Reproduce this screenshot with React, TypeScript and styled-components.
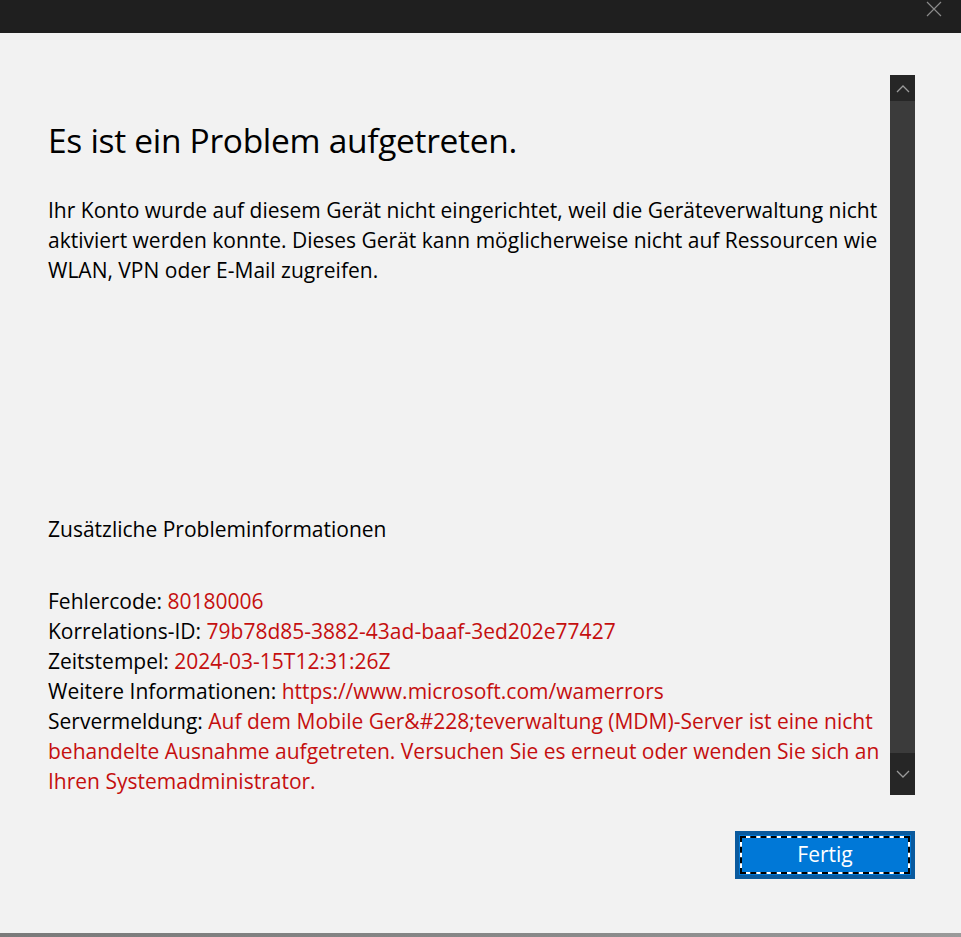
import React from "react";
import styled, { createGlobalStyle } from "styled-components";

const Global = createGlobalStyle`
  html, body { margin: 0; padding: 0; background: #f2f2f2; }
  body { font-family: "Open Sans", "Noto Sans", sans-serif; }
  * { box-sizing: border-box; }
`;

const Window = styled.div`
  width: 961px;
  height: 937px;
  display: flex;
  flex-direction: column;
  background: #f2f2f2;
  overflow: hidden;
`;

const TitleBar = styled.div`
  height: 33px;
  flex: none;
  background: #1f1f1f;
  display: flex;
  justify-content: flex-end;
  align-items: flex-start;
  padding: 1px 19px 0 0;
`;

const CloseIcon = styled.svg`
  width: 16px;
  height: 16px;
  display: block;
`;

const Body = styled.div`
  flex: 1;
  display: flex;
  flex-direction: column;
  padding: 42px 46px 0 48px;
`;

const Main = styled.div`
  display: flex;
  height: 720px;
  gap: 2px;
`;

const Content = styled.div`
  flex: 1;
  padding-top: 45px;
  color: #000;
  font-size: 21px;
  line-height: 30px;
  white-space: nowrap;
`;

const Title = styled.h1`
  margin: 0;
  font-weight: 400;
  font-size: 33.5px;
  line-height: 40px;
  letter-spacing: -0.3px;
`;

const Paragraph = styled.p`
  margin: 35px 0 0;
`;

const SubHeading = styled.p`
  margin: 229px 0 0;
`;

const InfoList = styled.div`
  margin-top: 42px;
  display: flex;
  flex-direction: column;
`;

const Value = styled.span`
  color: #c50f0f;
`;

const Scrollbar = styled.div`
  width: 25px;
  flex: none;
  display: flex;
  flex-direction: column;
  background: #262626;
`;

const ArrowBox = styled.div<{ $h: number }>`
  height: ${(p) => p.$h}px;
  display: flex;
  align-items: center;
  justify-content: center;
  flex: none;
`;

const Thumb = styled.div`
  flex: 1;
  background: #3b3b3b;
`;

const Footer = styled.div`
  display: flex;
  justify-content: flex-end;
  padding-top: 36px;
`;

const Button = styled.button`
  position: relative;
  width: 180px;
  height: 48px;
  border: 4px solid #0a5a9e;
  background: #0078d7;
  color: #fff;
  font-family: "Open Sans", "Noto Sans", sans-serif;
  font-size: 21px;
  padding: 0 0 2px;
  cursor: pointer;

  &::before,
  &::after {
    content: "";
    position: absolute;
    inset: 1px;
  }
  &::before {
    border: 2px solid #fff;
  }
  &::after {
    border: 2px dashed #000;
  }
`;

const BottomEdge = styled.div`
  height: 4px;
  flex: none;
  margin-top: auto;
  background: linear-gradient(90deg, #7a7a7a, #8a8a8a 60%, #9a9a9a);
`;

const Spacer = styled.div`
  flex: 1;
`;

const Chevron = ({ up }: { up?: boolean }) => (
  <svg width="14" height="9" viewBox="0 0 14 9">
    <path
      d={up ? "M1 8 L7 2 L13 8" : "M1 1 L7 7 L13 1"}
      fill="none"
      stroke="#9a9a9a"
      strokeWidth="1.3"
    />
  </svg>
);

const info: [string, string][] = [
  ["Fehlercode: ", "80180006"],
  ["Korrelations-ID: ", "79b78d85-3882-43ad-baaf-3ed202e77427"],
  ["Zeitstempel: ", "2024-03-15T12:31:26Z"],
  ["Weitere Informationen: ", "https://www.microsoft.com/wamerrors"],
];

export default function App() {
  return (
    <>
      <Global />
      <Window>
        <TitleBar>
          <CloseIcon viewBox="0 0 16 16">
            <path d="M1 1 L15 15 M15 1 L1 15" stroke="#8a8a8a" strokeWidth="1.2" />
          </CloseIcon>
        </TitleBar>
        <Body>
          <Main>
            <Content>
              <Title>Es ist ein Problem aufgetreten.</Title>
              <Paragraph>
                Ihr Konto wurde auf diesem Gerät nicht eingerichtet, weil die Geräteverwaltung nicht
                <br />
                aktiviert werden konnte. Dieses Gerät kann möglicherweise nicht auf Ressourcen wie
                <br />
                WLAN, VPN oder E-Mail zugreifen.
              </Paragraph>
              <SubHeading>Zusätzliche Probleminformationen</SubHeading>
              <InfoList>
                {info.map(([k, v]) => (
                  <div key={k}>
                    {k}
                    <Value>{v}</Value>
                  </div>
                ))}
                <div>
                  Servermeldung:{" "}
                  <Value>
                    Auf dem Mobile Ger&amp;#228;teverwaltung (MDM)-Server ist eine nicht
                    <br />
                    behandelte Ausnahme aufgetreten. Versuchen Sie es erneut oder wenden Sie sich an
                    <br />
                    Ihren Systemadministrator.
                  </Value>
                </div>
              </InfoList>
            </Content>
            <Scrollbar>
              <ArrowBox $h={26}>
                <Chevron up />
              </ArrowBox>
              <Thumb />
              <ArrowBox $h={42}>
                <Chevron />
              </ArrowBox>
            </Scrollbar>
          </Main>
          <Footer>
            <Button>Fertig</Button>
          </Footer>
          <Spacer />
        </Body>
        <BottomEdge />
      </Window>
    </>
  );
}
